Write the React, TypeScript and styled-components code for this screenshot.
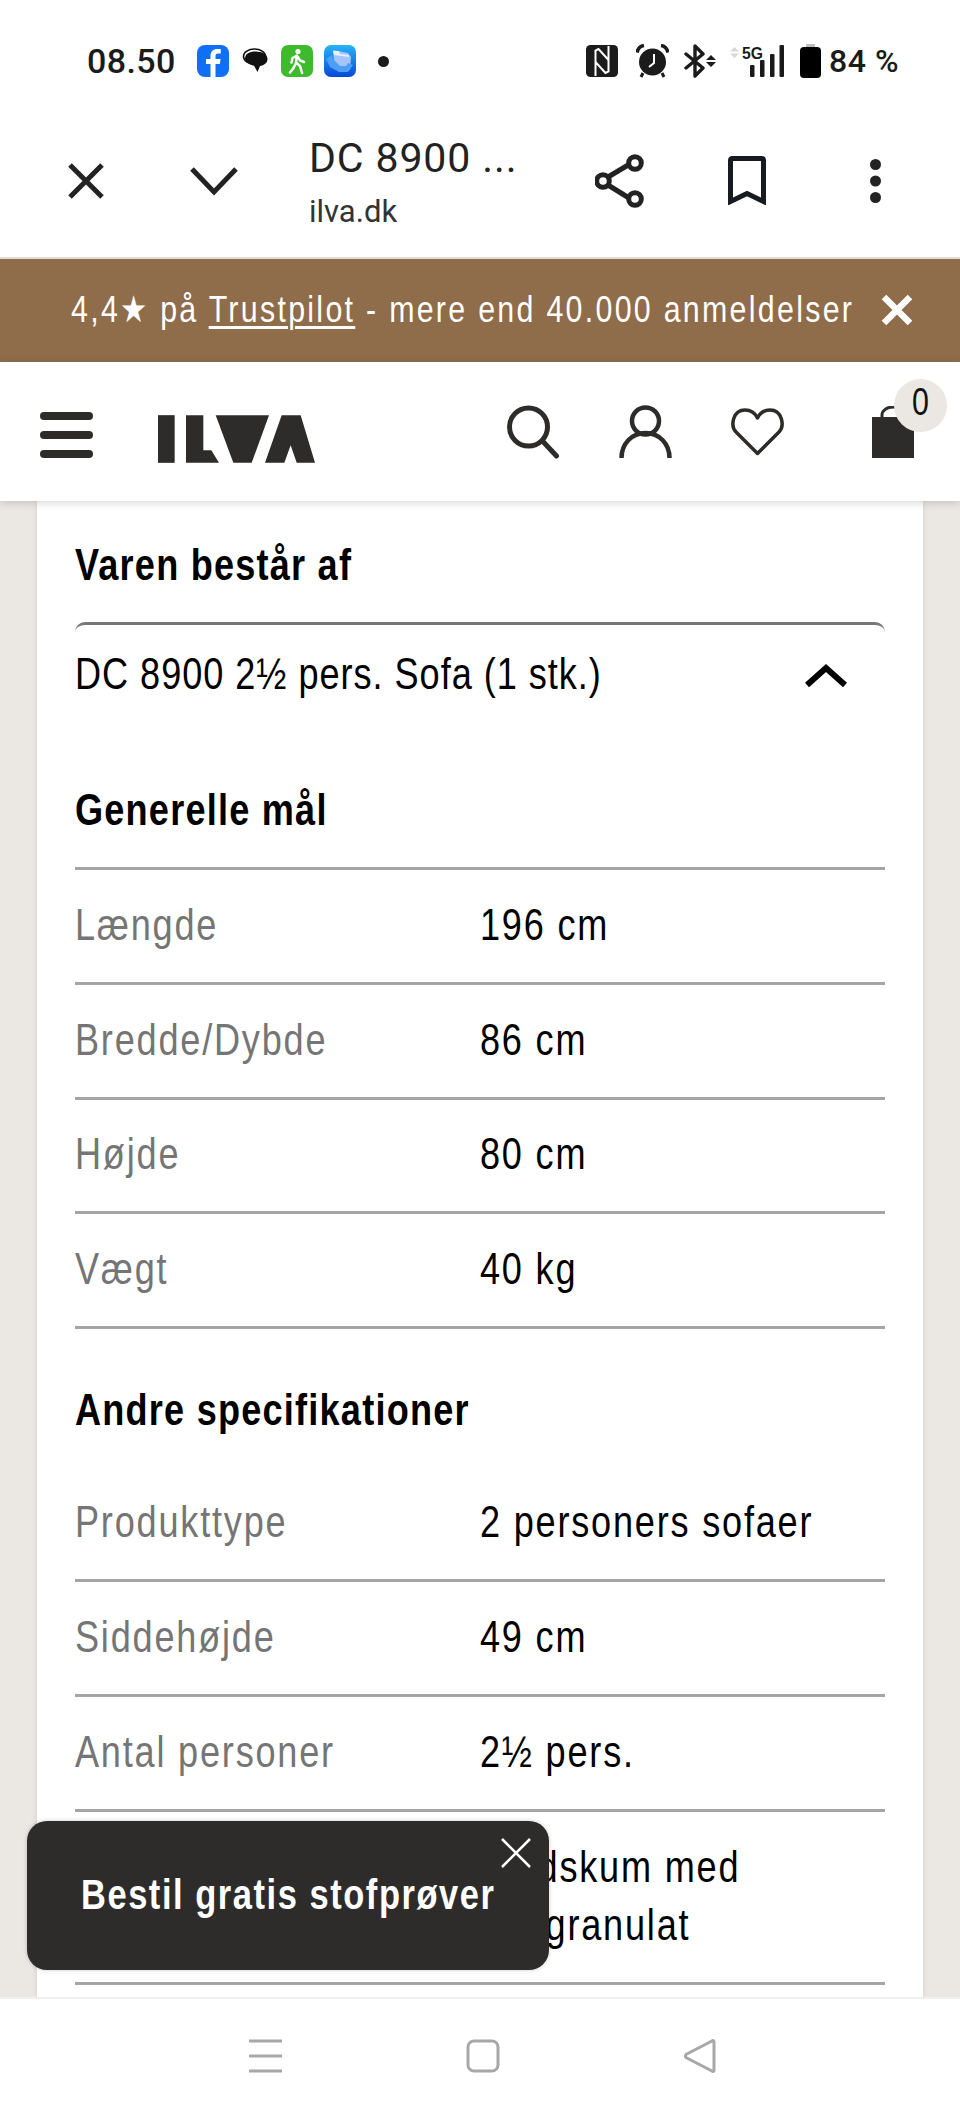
import React from "react";
import styled, { createGlobalStyle, css } from "styled-components";

const GlobalStyle = createGlobalStyle`
  html, body { margin: 0; padding: 0; background: #fff; }
  #root { width: 960px; height: 2114px; }
  * { box-sizing: border-box; }
`;

/* The shop's typeface is a condensed grotesque; Liberation Sans is narrowed to get there. */
const condensed = css`
  display: inline-block;
  white-space: nowrap;
  font-family: "Liberation Sans", Arial, sans-serif;
  transform: scaleX(0.82);
  transform-origin: left center;
`;

const Page = styled.div`
  position: relative;
  width: 960px;
  height: 2114px;
  display: flex;
  flex-direction: column;
  overflow: hidden;
  background: #fff;
`;

const StatusBar = styled.div`
  height: 100px;
  flex: none;
  display: flex;
  align-items: center;
  justify-content: space-between;
  padding: 22px 61px 0 87px;
  color: #1b1b1b;
  font-family: Roboto, "Liberation Sans", sans-serif;
`;

const StatusGroup = styled.div`
  display: flex;
  align-items: center;
`;

const Clock = styled.span`
  font-size: 34px;
  font-weight: 500;
  width: 87px;
  letter-spacing: 0.4px;
`;

const StatusIcon = styled.svg<{ $gap: number }>`
  flex: none;
  display: block;
  margin-left: ${(p) => p.$gap}px;
`;

const BatteryText = styled.span`
  font-size: 32px;
  font-weight: 500;
  margin-left: 8px;
  letter-spacing: 0.5px;
  white-space: nowrap;
`;

const BrowserBar = styled.div`
  height: 159px;
  flex: none;
  display: flex;
  align-items: center;
  border-bottom: 2px solid #dedbdb;
  padding: 4px 0 0 67px;
  color: #222;
`;

const BarButton = styled.svg<{ $gap: number }>`
  flex: none;
  display: block;
  margin-left: ${(p) => p.$gap}px;
`;

const PageInfo = styled.div`
  width: 286px;
  margin-left: 71px;
  margin-top: 2px;
  font-family: Roboto, "Liberation Sans", sans-serif;
  white-space: nowrap;
`;

const PageTitle = styled.div`
  font-size: 41px;
  font-weight: 400;
  line-height: 50px;
  letter-spacing: 0.9px;
`;

const PageDomain = styled.div`
  font-size: 31px;
  font-weight: 400;
  line-height: 38px;
  margin-top: 10px;
  color: #333;
`;

const Banner = styled.div`
  height: 103px;
  flex: none;
  position: relative;
  display: flex;
  align-items: center;
  padding: 0 0 2px 71px;
  background: #8f6c4a;
  color: #fff;
`;

const BannerText = styled.span`
  ${condensed}
  font-size: 37px;
  letter-spacing: 2.8px;
`;

const BannerLink = styled.span`
  text-decoration: underline;
  text-decoration-thickness: 3px;
  text-underline-offset: 4px;
`;

const BannerClose = styled.svg`
  position: absolute;
  left: 881px;
  top: 35px;
`;

const SiteHeader = styled.header`
  position: relative;
  z-index: 2;
  height: 139px;
  flex: none;
  display: flex;
  align-items: center;
  padding: 0 46px 0 40px;
  background: #fff;
  box-shadow: 0 2px 8px rgba(0, 0, 0, 0.16);
`;

const MenuIcon = styled.svg`
  display: block;
  margin-top: 7px;
`;

const Logo = styled.svg`
  display: block;
  margin: 14px 0 0 65px;
`;

const HeaderActions = styled.div`
  margin-left: auto;
  display: flex;
  align-items: center;
  gap: 59px;
`;

const BagLink = styled.div`
  position: relative;
  margin-left: 29px;
`;

const BagBadge = styled.span`
  position: absolute;
  left: 22px;
  top: -27px;
  width: 53px;
  height: 53px;
  border-radius: 50%;
  background: #ebe7e3;
  color: #111;
  display: flex;
  align-items: center;
  justify-content: center;
  font-family: "Liberation Sans", Arial, sans-serif;
  font-size: 38px;
  padding-bottom: 5px;
`;

const BadgeDigit = styled.span`
  transform: scaleX(0.8);
`;

const Content = styled.main`
  flex: 1;
  min-height: 0;
  overflow: hidden;
  background: #ebe7e3;
  padding: 0 37px;
`;

const Card = styled.section`
  height: 100%;
  background: #fff;
  box-shadow: 0 0 6px rgba(0, 0, 0, 0.1);
  padding: 32px 38px 0;
`;

const SectionTitle = styled.h2`
  margin: 0 0 25px;
  height: 64px;
  line-height: 64px;
  font-weight: 400;
`;

const TitleText = styled.span`
  ${condensed}
  font-size: 44px;
  font-weight: 700;
  letter-spacing: 1.5px;
  color: #000;
`;

const Accordion = styled.div`
  height: 131px;
  margin-bottom: 25px;
  border-top: 3px solid #777;
  border-radius: 10px 10px 0 0;
  display: flex;
  justify-content: space-between;
  padding-top: 20px;
  line-height: 58px;
`;

const AccordionLabel = styled.span`
  ${condensed}
  font-size: 44px;
  letter-spacing: 1.2px;
  color: #000;
`;

const AccordionChevron = styled.svg`
  margin: 19px 38px 0 0;
`;

const SpecTable = styled.div<{ $ruled?: boolean }>`
  margin-bottom: 49px;
  border-top: ${(p) => (p.$ruled ? "3px solid #a5a5a5" : "0")};
`;

const SpecRow = styled.div<{ $tall?: boolean }>`
  display: grid;
  grid-template-columns: 405px 1fr;
  align-items: center;
  height: ${(p) => (p.$tall ? 173 : 114.8)}px;
  padding-bottom: 2px;
  border-bottom: 3px solid #a5a5a5;
`;

const SpecLabel = styled.span`
  ${condensed}
  font-size: 44px;
  letter-spacing: 2.2px;
  color: #757575;
`;

const SpecValue = styled.span`
  ${condensed}
  font-size: 44px;
  letter-spacing: 2.2px;
  line-height: 58px;
  color: #000;
`;

const Toast = styled.aside`
  position: absolute;
  left: 27px;
  bottom: 144px;
  width: 522px;
  height: 149px;
  z-index: 3;
  display: flex;
  align-items: center;
  padding: 0 0 2px 54px;
  background: #2d2c2b;
  border-radius: 20px;
  box-shadow: 0 0 4px rgba(0, 0, 0, 0.2);
  color: #fff;
`;

const ToastText = styled.span`
  ${condensed}
  font-size: 42px;
  font-weight: 700;
  letter-spacing: 1.9px;
`;

const ToastClose = styled.svg`
  position: absolute;
  right: 18px;
  top: 17px;
`;

const BottomNav = styled.nav`
  position: relative;
  z-index: 2;
  height: 117px;
  flex: none;
  display: flex;
  align-items: center;
  padding: 0 0 2px 247px;
  gap: 183px;
  background: #fff;
  border-top: 2px solid #efefef;
`;

export default function App() {
  return (
    <Page>
      <GlobalStyle />
      <StatusBar>
        <StatusGroup>
          <Clock>08.50</Clock>
          <StatusIcon $gap={23} width="32" height="32" viewBox="0 0 32 32">
            <rect width="32" height="32" rx="8" fill="#0f6ff5" />
            <path d="M18.5 32V19h4.300l.8-5h-5.100v-3c0-1.500.6-2.500 2.600-2.500h2.700V4.100C23 4 21.700 3.900 20.300 3.900c-4 0-6.800 2.400-6.800 6.800V14H9v5h4.500v13z" fill="#fff" />
          </StatusIcon>
          <StatusIcon $gap={13} width="26" height="26" viewBox="0 0 26 26">
            <ellipse cx="12.500" cy="8.500" rx="11" ry="7.500" fill="#fff" stroke="#111" strokeWidth="1.600" />
            <path d="M13.500 3.500c6.500 0 12 2.700 12 7.500 0 3.900-3.500 6.500-7.500 7l-2.500 6-3.500-6.300C7 16.500 3 14 3 10.500 3 6 7.500 3.500 13.500 3.500z" fill="#111" />
          </StatusIcon>
          <StatusIcon $gap={13} width="32" height="32" viewBox="0 0 32 32">
            <rect width="32" height="32" rx="7" fill="#3dbb2c" />
            <circle cx="17" cy="6.500" r="2.600" fill="#fff" />
            <path d="M16 10.500l-4.500 2.500-1 4.500M16 10.500l-1 7 4 3.500 2 7M15 18l-2.500 5-3.500 4.500M17 12l2 3.500 4 1.500" fill="none" stroke="#fff" strokeWidth="2.500" strokeLinecap="round" strokeLinejoin="round" />
          </StatusIcon>
          <StatusIcon $gap={11} width="32" height="32" viewBox="0 0 32 32">
            <defs>
              <linearGradient id="filesTile" x1="0" y1="0" x2="0" y2="1">
                <stop offset="0" stopColor="#28b4f8" />
                <stop offset="1" stopColor="#0748d8" />
              </linearGradient>
            </defs>
            <rect width="32" height="32" rx="7" fill="url(#filesTile)" />
            <path d="M9 5l15 3 3 4-1 13-13-1-3-8z" fill="#a4c4fa" />
            <path d="M9 6h6l1 3 9 1v2L10 10z" fill="#e6effd" />
            <path d="M2 14l6-4 1 4 7 7 6 0 2-3 5 2-5 7-9 0-9-5z" fill="#4c9ff2" />
          </StatusIcon>
          <StatusIcon $gap={22} width="11" height="11" viewBox="0 0 11 11">
            <circle cx="5.500" cy="5.500" r="5.500" fill="#1b1b1b" />
          </StatusIcon>
        </StatusGroup>
        <StatusGroup>
          <StatusIcon $gap={0} width="32" height="32" viewBox="0 0 32 32">
            <rect width="32" height="32" rx="4.500" fill="#1b1b1b" />
            <path d="M9.500 31V5.500l3-1.500 10 11M22.500 1v25.500l-3 1.500-10-11" fill="none" stroke="#fff" strokeWidth="2" />
          </StatusIcon>
          <StatusIcon $gap={18} width="33" height="34" viewBox="0 0 33 34">
            <circle cx="16.500" cy="18" r="13.500" fill="#1b1b1b" />
            <path d="M1 8.500C2 4 4.500 2 8 1.500M32 8.500C31 4 28.500 2 25 1.500" fill="none" stroke="#1b1b1b" strokeWidth="3.500" />
            <path d="M7 29l-2 4M26 29l2 4" stroke="#1b1b1b" strokeWidth="3" />
            <path d="M18 10v9l-5 4" fill="none" stroke="#fff" strokeWidth="2" />
          </StatusIcon>
          <StatusIcon $gap={15} width="32" height="34" viewBox="0 0 32 34">
            <path d="M2 10l17 14-8 8V2l8 8L2 24" fill="none" stroke="#1b1b1b" strokeWidth="3.400" strokeLinejoin="round" strokeLinecap="round" />
            <path d="M27 11l5 5H22zM27 23l-5-5h10z" fill="#1b1b1b" />
          </StatusIcon>
          <StatusIcon $gap={14} width="54" height="34" viewBox="0 0 54 34">
            <path d="M4.500 3l4.500 4.500H0zM4.500 14L0 9.500h9z" fill="#d8d8d8" />
            <text x="12" y="15" fontFamily="'Liberation Sans', sans-serif" fontWeight="700" fontSize="17" fill="#1b1b1b" textLength="21" lengthAdjust="spacingAndGlyphs">5G</text>
            <rect x="20" y="21" width="4.500" height="12" rx="1" fill="#1b1b1b" />
            <rect x="30" y="16" width="4.500" height="17" rx="1" fill="#1b1b1b" />
            <rect x="40" y="10" width="4.500" height="23" rx="1" fill="#1b1b1b" />
            <rect x="49.500" y="1" width="4.500" height="32" rx="1" fill="#1b1b1b" />
          </StatusIcon>
          <StatusIcon $gap={16} width="21" height="34" viewBox="0 0 21 34">
            <rect x="6" y="0" width="9" height="5" rx="1" fill="#bdbdbd" />
            <rect x="0" y="3" width="21" height="31" rx="4" fill="#000" />
          </StatusIcon>
          <BatteryText>84 %</BatteryText>
        </StatusGroup>
      </StatusBar>

      <BrowserBar>
        <BarButton $gap={0} width="38" height="38" viewBox="0 0 38 38">
          <path d="M3 3l32 32M35 3L3 35" fill="none" stroke="#222" strokeWidth="5" />
        </BarButton>
        <BarButton $gap={85} width="48" height="30" viewBox="0 0 48 30">
          <path d="M2 3l22 23L46 3" fill="none" stroke="#222" strokeWidth="5" />
        </BarButton>
        <PageInfo>
          <PageTitle>DC 8900 ...</PageTitle>
          <PageDomain>ilva.dk</PageDomain>
        </PageInfo>
        <BarButton $gap={0} width="50" height="54" viewBox="0 0 50 54">
          <path d="M13 23L34 10.500M13 31l21 13" stroke="#222" strokeWidth="5" />
          <circle cx="40" cy="9" r="6.300" fill="#fff" stroke="#222" strokeWidth="5" />
          <circle cx="8" cy="27" r="6.300" fill="#fff" stroke="#222" strokeWidth="5" />
          <circle cx="40" cy="45" r="6.300" fill="#fff" stroke="#222" strokeWidth="5" />
        </BarButton>
        <BarButton $gap={83} width="38" height="49" viewBox="0 0 38 49">
          <path d="M2.500 45.500V4.500q0-2 2-2h29q2 0 2 2v41L19 37.500z" fill="none" stroke="#161a21" strokeWidth="5" />
        </BarButton>
        <BarButton $gap={104} width="11" height="44" viewBox="0 0 11 44">
          <circle cx="5.500" cy="5.500" r="5.500" fill="#222" />
          <circle cx="5.500" cy="22" r="5.500" fill="#222" />
          <circle cx="5.500" cy="38.500" r="5.500" fill="#222" />
        </BarButton>
      </BrowserBar>

      <Banner>
        <BannerText>
          4,4★ på <BannerLink>Trustpilot</BannerLink> - mere end 40.000 anmeldelser
        </BannerText>
        <BannerClose width="32" height="32" viewBox="0 0 32 32">
          <path d="M3 3l26 26M29 3L3 29" stroke="#fff" strokeWidth="6.500" />
        </BannerClose>
      </Banner>

      <SiteHeader>
        <MenuIcon width="53" height="46" viewBox="0 0 53 46">
          <rect width="53" height="8" rx="4" fill="#2d2c2b" />
          <rect y="19" width="53" height="8" rx="4" fill="#2d2c2b" />
          <rect y="38" width="53" height="8" rx="4" fill="#2d2c2b" />
        </MenuIcon>
        <Logo width="157" height="48" viewBox="24 30 471 143">
          <rect x="24" y="30" width="50" height="143" fill="#2d2c2b" />
          <path d="M108 30h52v105h24l23 38H108z" fill="#2d2c2b" />
          <path d="M197 30h160l-52 143h-55z" fill="#2d2c2b" />
          <path d="M395 30h57l43 143h-55l-18-53-19 53h-58z" fill="#2d2c2b" />
        </Logo>
        <HeaderActions>
          <svg width="53" height="54" viewBox="0 0 53 54">
            <circle cx="21.500" cy="22" r="19" fill="none" stroke="#2d2c2b" strokeWidth="5" />
            <path d="M35.500 36l14 15" stroke="#2d2c2b" strokeWidth="5" strokeLinecap="round" />
          </svg>
          <svg width="53" height="54" viewBox="0 0 53 54">
            <circle cx="26.500" cy="16" r="13.500" fill="none" stroke="#2d2c2b" strokeWidth="4.500" />
            <path d="M2.500 53c0-14 10-25 24-25s24 11 24 25" fill="none" stroke="#2d2c2b" strokeWidth="4.500" />
          </svg>
          <svg width="53" height="48" viewBox="0 0 53 48">
            <path d="M26.500 45.500L5 24C-1 17.500 2 2 14 2c6 0 10 3 12.500 8C29 5 33 2 39 2c12 0 15 15.500 9 22z" fill="none" stroke="#2d2c2b" strokeWidth="3.500" strokeLinejoin="round" />
          </svg>
          <BagLink>
            <svg width="42" height="52" viewBox="0 0 42 52" display="block">
              <path d="M10 11V9a11 8 0 0 1 22 0v2" fill="none" stroke="#2d2c2b" strokeWidth="3" />
              <rect y="11" width="42" height="41" fill="#2d2c2b" />
            </svg>
            <BagBadge>
              <BadgeDigit>0</BadgeDigit>
            </BagBadge>
          </BagLink>
        </HeaderActions>
      </SiteHeader>

      <Content>
        <Card>
          <SectionTitle>
            <TitleText>Varen består af</TitleText>
          </SectionTitle>
          <Accordion>
            <AccordionLabel>DC 8900 2½ pers. Sofa (1 stk.)</AccordionLabel>
            <AccordionChevron width="42" height="24" viewBox="0 0 42 24">
              <path d="M2 21L21 4l19 17" fill="none" stroke="#000" strokeWidth="6" />
            </AccordionChevron>
          </Accordion>
          <SectionTitle>
            <TitleText>Generelle mål</TitleText>
          </SectionTitle>
          <SpecTable $ruled>
            <SpecRow><SpecLabel>Længde</SpecLabel><SpecValue>196 cm</SpecValue></SpecRow>
            <SpecRow><SpecLabel>Bredde/Dybde</SpecLabel><SpecValue>86 cm</SpecValue></SpecRow>
            <SpecRow><SpecLabel>Højde</SpecLabel><SpecValue>80 cm</SpecValue></SpecRow>
            <SpecRow><SpecLabel>Vægt</SpecLabel><SpecValue>40 kg</SpecValue></SpecRow>
          </SpecTable>
          <SectionTitle>
            <TitleText>Andre specifikationer</TitleText>
          </SectionTitle>
          <SpecTable>
            <SpecRow><SpecLabel>Produkttype</SpecLabel><SpecValue>2 personers sofaer</SpecValue></SpecRow>
            <SpecRow><SpecLabel>Siddehøjde</SpecLabel><SpecValue>49 cm</SpecValue></SpecRow>
            <SpecRow><SpecLabel>Antal personer</SpecLabel><SpecValue>2½ pers.</SpecValue></SpecRow>
            <SpecRow $tall>
              <span />
              <SpecValue>Koldskum med<br />PE-granulat</SpecValue>
            </SpecRow>
          </SpecTable>
        </Card>
      </Content>

      <Toast>
        <ToastText>Bestil gratis stofprøver</ToastText>
        <ToastClose width="30" height="30" viewBox="0 0 30 30">
          <path d="M1 1l28 28M29 1L1 29" stroke="#fff" strokeWidth="2.500" />
        </ToastClose>
      </Toast>

      <BottomNav>
        <svg width="36" height="36" viewBox="0 0 36 36">
          <path d="M2 3h33M2 18h33M2 33h33" stroke="#a8a8a8" strokeWidth="3" />
        </svg>
        <svg width="34" height="34" viewBox="0 0 34 34">
          <rect x="2" y="2" width="30" height="30" rx="6" fill="none" stroke="#a8a8a8" strokeWidth="3" />
        </svg>
        <svg width="34" height="34" viewBox="0 0 34 34">
          <path d="M31 2.500v29a1 1 0 0 1-1.700.7L3 18.500a2 2 0 0 1 0-3L29.300 1.800A1 1 0 0 1 31 2.500z" fill="none" stroke="#a8a8a8" strokeWidth="3" />
        </svg>
      </BottomNav>
    </Page>
  );
}
